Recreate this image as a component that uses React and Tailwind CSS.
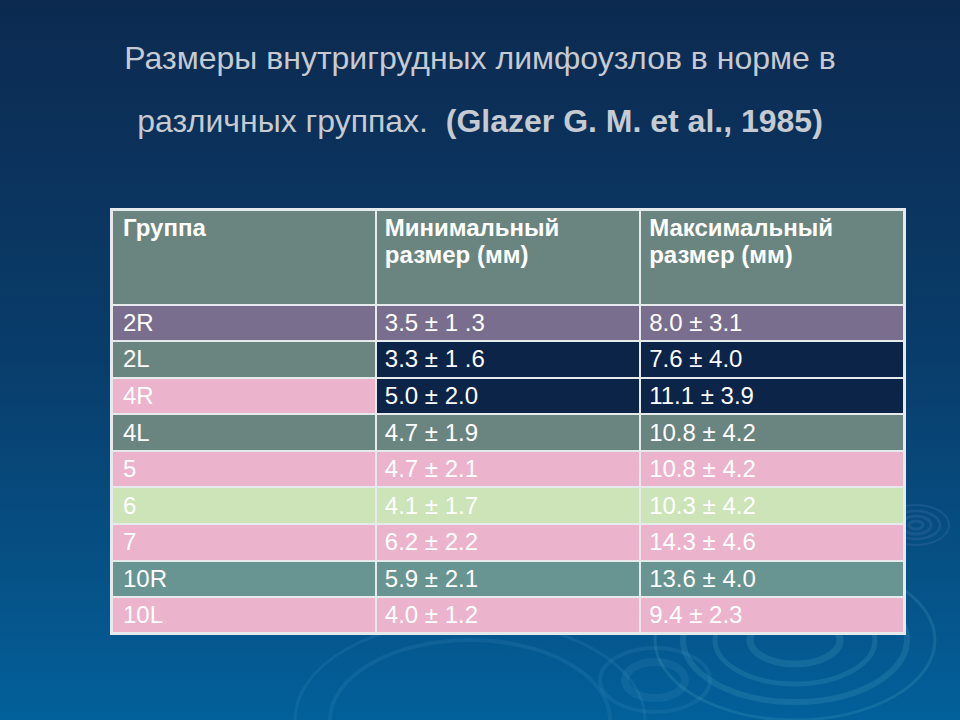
import React from "react";

const rows = [
  { group: "2R", min: "3.5 ± 1 .3", max: "8.0 ± 3.1", bg: ["bg-[#7a6e8e]", "bg-[#7a6e8e]", "bg-[#7a6e8e]"] },
  { group: "2L", min: "3.3 ± 1 .6", max: "7.6 ± 4.0", bg: ["bg-[#6a8580]", "bg-[#0b2448]", "bg-[#0b2448]"] },
  { group: "4R", min: "5.0 ± 2.0", max: "11.1 ± 3.9", bg: ["bg-[#ecb3cc]", "bg-[#0b2448]", "bg-[#0b2448]"] },
  { group: "4L", min: "4.7 ± 1.9", max: "10.8 ± 4.2", bg: ["bg-[#6a8580]", "bg-[#6a8580]", "bg-[#6a8580]"] },
  { group: "5", min: "4.7 ± 2.1", max: "10.8 ± 4.2", bg: ["bg-[#ecb3cc]", "bg-[#ecb3cc]", "bg-[#ecb3cc]"] },
  { group: "6", min: "4.1 ± 1.7", max: "10.3 ± 4.2", bg: ["bg-[#cce4b8]", "bg-[#cce4b8]", "bg-[#cce4b8]"] },
  { group: "7", min: "6.2 ± 2.2", max: "14.3 ± 4.6", bg: ["bg-[#ecb3cc]", "bg-[#ecb3cc]", "bg-[#ecb3cc]"] },
  { group: "10R", min: "5.9 ± 2.1", max: "13.6 ± 4.0", bg: ["bg-[#689492]", "bg-[#689492]", "bg-[#689492]"] },
  { group: "10L", min: "4.0 ± 1.2", max: "9.4 ± 2.3", bg: ["bg-[#ecb3cc]", "bg-[#ecb3cc]", "bg-[#ecb3cc]"] },
];

// faint water ripples in the background
const Ripples = () => (
  <svg className="absolute inset-0 pointer-events-none" width="960" height="720" viewBox="0 0 960 720">
    <g fill="none" stroke="#6cc0d4" strokeOpacity="0.16">
      <ellipse cx="795" cy="640" rx="45" ry="24" strokeWidth="7" />
      <ellipse cx="795" cy="640" rx="80" ry="44" strokeWidth="5" />
      <ellipse cx="795" cy="640" rx="112" ry="62" strokeWidth="6" />
      <ellipse cx="795" cy="640" rx="140" ry="80" strokeWidth="3" />
    </g>
    <g fill="none" stroke="#4a9cc4" strokeOpacity="0.16">
      <ellipse cx="655" cy="680" rx="30" ry="18" strokeWidth="8" />
      <ellipse cx="655" cy="680" rx="55" ry="32" strokeWidth="4" />
      <ellipse cx="470" cy="720" rx="140" ry="80" strokeWidth="4" />
      <ellipse cx="470" cy="720" rx="175" ry="100" strokeWidth="3" />
    </g>
    <g fill="none" stroke="#1b5a90" strokeOpacity="0.9">
      <ellipse cx="916" cy="525" rx="7" ry="4" strokeWidth="3" />
      <ellipse cx="916" cy="525" rx="15" ry="9" strokeWidth="3" />
      <ellipse cx="916" cy="525" rx="24" ry="14" strokeWidth="2.5" />
      <ellipse cx="916" cy="525" rx="33" ry="20" strokeWidth="2" />
    </g>
  </svg>
);

export default function App() {
  return (
    <div className="relative w-[960px] h-[720px] overflow-hidden bg-gradient-to-b from-[#0c2a50] via-[#083d6b] to-[#02609a] font-['Liberation_Sans',Arial,sans-serif]">
      <Ripples />
      <div className="relative">
        <div className="pt-[27px] text-center text-[#c6cad1] text-[32px] leading-[63px]">
          <div>Размеры внутригрудных лимфоузлов в норме в</div>
          <div>
            различных группах.&nbsp; <span className="font-bold">(Glazer G. M. et al., 1985)</span>
          </div>
        </div>
        <table className="mt-[55px] ml-[110px] w-[796px] table-fixed border-collapse border-[3px] border-[#e6eaec] text-white text-[24px] leading-[28px]">
          <thead>
            <tr className="bg-[#6a8580] h-[95px] align-top leading-[27px]">
              <th className="text-left font-bold pl-[10px] pt-[3px] border-2 border-[#e6eaec]">Группа</th>
              <th className="text-left font-bold pl-[8px] pt-[3px] border-2 border-[#e6eaec]">
                Минимальный<br />размер (мм)
              </th>
              <th className="text-left font-bold pl-[8px] pt-[3px] border-2 border-[#e6eaec]">
                Максимальный<br />размер (мм)
              </th>
            </tr>
          </thead>
          <tbody>
            {rows.map((row) => (
              <tr key={row.group} className="h-[36.6px]">
                <td className={`${row.bg[0]} pl-[10px] border-2 border-[#e6eaec]`}>{row.group}</td>
                <td className={`${row.bg[1]} pl-[8px] border-2 border-[#e6eaec]`}>{row.min}</td>
                <td className={`${row.bg[2]} pl-[8px] border-2 border-[#e6eaec]`}>{row.max}</td>
              </tr>
            ))}
          </tbody>
        </table>
      </div>
    </div>
  );
}
